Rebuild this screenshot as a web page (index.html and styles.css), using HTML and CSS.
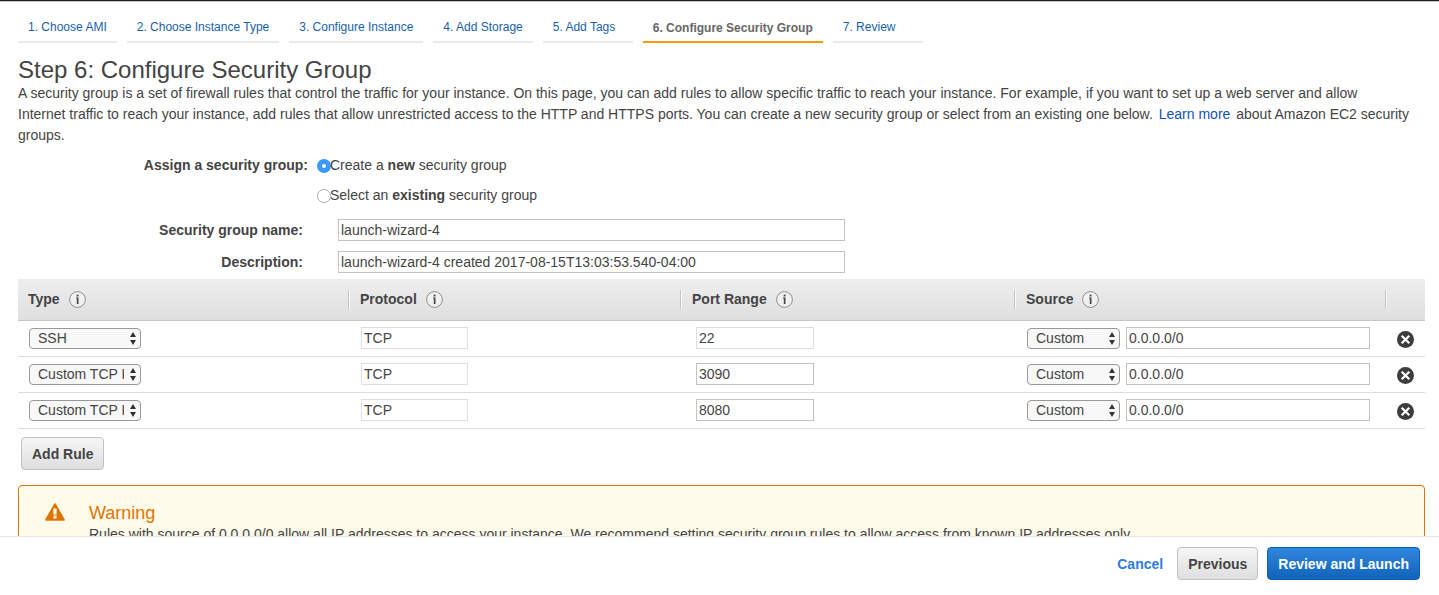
FILE: index.html
```html
<!DOCTYPE html>
<html lang="en">
<head>
<meta charset="utf-8">
<title>Configure Security Group</title>
<link rel="stylesheet" href="styles.css">
</head>
<body>
<svg class="sprite" aria-hidden="true">
  <symbol id="info" viewBox="0 0 17 17">
    <circle cx="8.5" cy="8.5" r="7.9" fill="#f0f0f0" stroke="#8c8c8c" stroke-width="1"/>
    <rect x="7.7" y="3.6" width="1.8" height="1.9" fill="#444"/>
    <path d="M7 6.6h2.5V13H7.8V7.4H7z" fill="#444"/>
  </symbol>
  <symbol id="remove" viewBox="0 0 17 17">
    <circle cx="8.5" cy="8.5" r="8.5" fill="#3d3d3d"/>
    <path d="M4.7 4.7l7.6 7.6M12.3 4.7l-7.6 7.6" stroke="#fff" stroke-width="2.2"/>
  </symbol>
</svg>
<main class="content">
  <nav class="steps">
    <a class="step" href="#">1. Choose AMI</a>
    <a class="step" href="#">2. Choose Instance Type</a>
    <a class="step" href="#">3. Configure Instance</a>
    <a class="step" href="#">4. Add Storage</a>
    <a class="step" href="#">5. Add Tags</a>
    <span class="step step-active">6. Configure Security Group</span>
    <a class="step" href="#">7. Review</a>
  </nav>

  <h1 class="title">Step 6: Configure Security Group</h1>
  <p class="intro">A security group is a set of firewall rules that control the traffic for your instance. On this page, you can add rules to allow specific traffic to reach your instance. For example, if you want to set up a web server and allow<br>Internet traffic to reach your instance, add rules that allow unrestricted access to the HTTP and HTTPS ports. You can create a new security group or select from an existing one below. <a class="learn" href="#">Learn more</a> about Amazon EC2 security groups.</p>

  <div class="assign" role="radiogroup" aria-labelledby="assign-label">
    <span class="assign-label" id="assign-label">Assign a security group:</span>
    <div class="choices">
      <label class="choice"><input class="radio" type="radio" name="group" checked><span>Create a <b>new</b> security group</span></label>
      <label class="choice"><input class="radio" type="radio" name="group"><span>Select an <b>existing</b> security group</span></label>
    </div>
  </div>
  <div class="fields">
    <div class="field">
      <label class="field-label" for="name">Security group name:</label>
      <input class="text field-input" id="name" type="text" value="launch-wizard-4">
    </div>
    <div class="field">
      <label class="field-label" for="desc">Description:</label>
      <input class="text field-input" id="desc" type="text" value="launch-wizard-4 created 2017-08-15T13:03:53.540-04:00">
    </div>
  </div>

  <table class="rules">
    <colgroup><col class="col-type"><col class="col-protocol"><col class="col-port"><col class="col-source"><col class="col-remove"></colgroup>
    <thead>
      <tr>
        <th><div class="head head-first">Type <svg class="icon"><use href="#info"/></svg></div></th>
        <th><div class="head">Protocol <svg class="icon"><use href="#info"/></svg></div></th>
        <th><div class="head">Port Range <svg class="icon"><use href="#info"/></svg></div></th>
        <th><div class="head">Source <svg class="icon"><use href="#info"/></svg></div></th>
        <th><div class="head"></div></th>
      </tr>
    </thead>
    <tbody>
      <tr>
        <td><div class="cell cell-type"><select class="select select-type" aria-label="Type"><option>SSH</option></select></div></td>
        <td><div class="cell"><input class="text text-off protocol" aria-label="Protocol" value="TCP" readonly></div></td>
        <td><div class="cell cell-port"><input class="text text-off port" aria-label="Port range" value="22" readonly></div></td>
        <td><div class="cell cell-source"><select class="select select-source" aria-label="Source type"><option>Custom</option></select><input class="text source" aria-label="Source" value="0.0.0.0/0"></div></td>
        <td><div class="cell cell-remove"><button class="remove" aria-label="Remove rule"><svg class="icon"><use href="#remove"/></svg></button></div></td>
      </tr>
      <tr>
        <td><div class="cell cell-type"><select class="select select-type" aria-label="Type"><option>Custom TCP Rule</option></select></div></td>
        <td><div class="cell"><input class="text text-off protocol" aria-label="Protocol" value="TCP" readonly></div></td>
        <td><div class="cell cell-port"><input class="text port" aria-label="Port range" value="3090"></div></td>
        <td><div class="cell cell-source"><select class="select select-source" aria-label="Source type"><option>Custom</option></select><input class="text source" aria-label="Source" value="0.0.0.0/0"></div></td>
        <td><div class="cell cell-remove"><button class="remove" aria-label="Remove rule"><svg class="icon"><use href="#remove"/></svg></button></div></td>
      </tr>
      <tr>
        <td><div class="cell cell-type"><select class="select select-type" aria-label="Type"><option>Custom TCP Rule</option></select></div></td>
        <td><div class="cell"><input class="text text-off protocol" aria-label="Protocol" value="TCP" readonly></div></td>
        <td><div class="cell cell-port"><input class="text port" aria-label="Port range" value="8080"></div></td>
        <td><div class="cell cell-source"><select class="select select-source" aria-label="Source type"><option>Custom</option></select><input class="text source" aria-label="Source" value="0.0.0.0/0"></div></td>
        <td><div class="cell cell-remove"><button class="remove" aria-label="Remove rule"><svg class="icon"><use href="#remove"/></svg></button></div></td>
      </tr>
    </tbody>
  </table>

  <button class="button add">Add Rule</button>

  <section class="warning">
    <svg class="warning-icon" viewBox="0 0 20 18" aria-hidden="true">
      <path d="M10 1.2L18.8 16.8H1.2z" fill="#df7500" stroke="#df7500" stroke-width="2" stroke-linejoin="round"/>
      <path d="M8.4 5.5h3.2v6H8.4zM8.4 12.6h3.2v3H8.4z" fill="#fffbea"/>
    </svg>
    <div>
      <h2 class="warning-title">Warning</h2>
      <p class="warning-text">Rules with source of 0.0.0.0/0 allow all IP addresses to access your instance. We recommend setting security group rules to allow access from known IP addresses only.</p>
    </div>
  </section>
</main>
<footer class="footer">
  <a class="cancel" href="#">Cancel</a>
  <button class="button">Previous</button>
  <button class="button button-primary">Review and Launch</button>
</footer>
</body>
</html>
```
FILE: styles.css
```css
* { box-sizing: border-box; }
body {
  margin: 0;
  height: 100vh;
  display: flex;
  flex-direction: column;
  border-top: 1px solid #231f20;
  background: #fff;
  color: #444;
  font: 14px/21px "Liberation Sans", Arial, sans-serif;
}
h1, h2, p { margin: 0; font-weight: normal; }
a { text-decoration: none; }
input, select, button { margin: 0; font: inherit; color: inherit; }
.sprite { display: none; }
.icon { display: block; width: 17px; height: 17px; flex: none; }

.content {
  flex: 1;
  min-height: 0;
  overflow: hidden;
  padding: 0 14px 0 18px;
  border-top: 1px solid #c8c8c8;
}

.steps { display: flex; gap: 10px; padding-top: 15px; font-size: 12px; }
.step {
  min-width: 90px;
  height: 26px;
  padding: 0 10px;
  border-bottom: 2px solid #eaeaea;
  color: #1862ad;
  white-space: nowrap;
}
.step-active { padding-top: 1px; border-color: #ff9900; color: #666; font-weight: bold; }

.title { padding-top: 14px; font-size: 24px; line-height: 26px; }
.learn { margin: 0 2px; color: #1251ba; }

.assign { display: flex; gap: 9px; padding-top: 4px; line-height: 30px; }
.assign-label { width: 290px; text-align: right; font-weight: bold; }
.choice { display: flex; align-items: center; }
.radio {
  appearance: none;
  width: 14px;
  height: 14px;
  margin: 2px -1px 0 0;
  border: 1px solid #aaa;
  border-radius: 50%;
  background: #fff;
}
.radio:checked { border: 5px solid #3b99fc; }

.fields { display: grid; gap: 10px; padding: 9px 0 6px; }
.field { display: flex; gap: 35px; }
.field-label { width: 285px; text-align: right; font-weight: bold; line-height: 22px; }
.field-input { width: 36%; }
.text {
  height: 22px;
  padding: 0 2px;
  border: 1px solid #c3c3c3;
  border-radius: 0;
  background: #fff;
  min-width: 0;
}
.text-off { border-color: #dedede; }

.rules { width: 100%; table-layout: fixed; border-collapse: separate; border-spacing: 0; }
.rules th, .rules td { padding: 0; text-align: left; }
.rules thead { background: linear-gradient(#eee, #dfdfdf); }
.rules th { height: 42px; border-bottom: 1px solid #c6c6c6; }
.rules td { height: 36px; border-bottom: 1px solid #ddd; }
.col-type { width: 330px; }
.col-protocol { width: 332px; }
.col-port { width: 334px; }
.col-remove { width: 40px; }
.head {
  display: flex;
  align-items: center;
  gap: 9px;
  height: 19px;
  padding-left: 11px;
  border-left: 1px solid #c4c4c4;
  box-shadow: inset 1px 0 #fafafa;
}
.head-first { padding-left: 10px; border-left: 0; box-shadow: none; }
.cell { display: flex; align-items: center; height: 34px; padding: 0 0 2px 13px; }
.cell-type { padding-left: 11px; }
.cell-port { padding-left: 16px; }
.cell-source { gap: 6px; padding-right: 15px; }
.cell-remove { padding: 3px 0 2px 12px; }
.protocol { width: 107px; }
.port { width: 118px; }
.source { flex: 1; }
.select {
  appearance: none;
  height: 21px;
  margin-top: 1px;
  padding: 0 16px 0 8px;
  border: 1px solid #999;
  border-radius: 4px;
  line-height: 19px;
  background: #f8f8f8 url("data:image/svg+xml,%3Csvg xmlns='http://www.w3.org/2000/svg' width='6' height='13'%3E%3Cpath d='M3 0l3 5H0zM0 8h6l-3 5z' fill='%23333'/%3E%3C/svg%3E") no-repeat right 4px center;
}
.select-type { width: 112px; }
.select-source { width: 93px; }
.remove { padding: 0; border: 0; background: none; }

.button {
  height: 33px;
  padding: 2px 10px 0;
  border: 1px solid #c2c2c2;
  border-radius: 4px;
  background: linear-gradient(#f6f6f6, #dedede);
  font-weight: bold;
}
.button-primary {
  border-color: #0e5cb0;
  background: linear-gradient(#2f87dd, #1064ba);
  color: #fff;
}
.add { display: block; margin: 8px 3px 15px; }

.warning {
  display: flex;
  gap: 23px;
  padding: 16px 25px;
  border: 1px solid #df7500;
  border-radius: 4px;
  background: #fffbea;
}
.warning-icon { flex: none; width: 20px; height: 18px; margin: 1px 1px 0; }
.warning-title { color: #df7500; font-size: 18px; line-height: 22px; }

.footer {
  flex: none;
  display: flex;
  align-items: center;
  justify-content: flex-end;
  gap: 9px;
  padding: 10px 19px 15px;
  border-top: 1px solid #e4e4e4;
}
.cancel { margin-right: 5px; padding-top: 2px; color: #2f7be0; font-weight: bold; }
```
